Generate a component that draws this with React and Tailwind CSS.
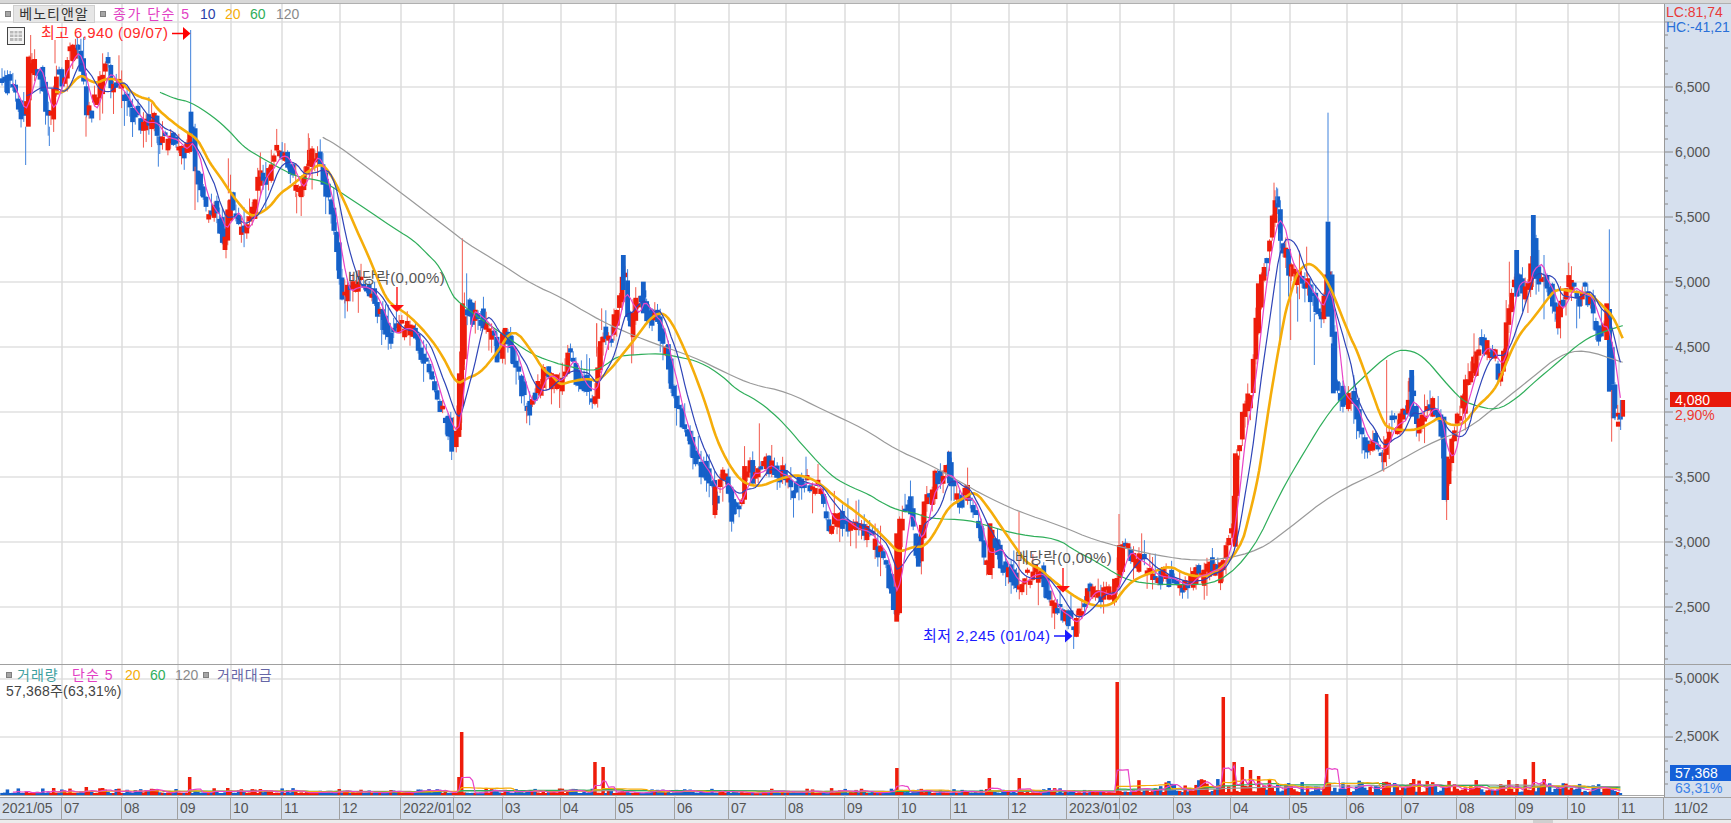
const RED = '#ee1c0a'
const BLUE = '#1560c8'
const RED_WICK = '#f2584c'
const BLUE_WICK = '#3f82dc'

// traced from the chart, in 3x crop coordinates
const crop = (ox, oy, pts) => pts.map(([x, y]) => [ox + x / 3, oy + y / 3])

const PRICE_PATH = [
  ...crop(0, 20, [[5,165],[20,190],[40,210],[55,270],[75,300],[85,150],[100,130],[125,170],[135,270],[150,320],[160,240],[170,150],[190,190],[200,110],[215,90],[235,110],[245,150],[260,290],[280,260],[295,230],[310,130],[325,150],[335,210],[360,200],[380,260],[410,290],[430,320],[460,290],[465,320],[490,370],[510,340],[530,380],[560,395],[575,310],[585,440],[605,510],[620,580],[640,560],[660,620],[675,670],[690,520],[710,610],[730,640],[750,600],[765,530],[780,450],[800,470],[815,430],[830,390],[850,420],[870,430],[880,490],[905,520],[920,430],[935,400],[955,420],[975,510],[990,570],[1005,630],[1015,720]]),
  ...crop(300, 230, [[120,200],[140,180],[165,170],[190,170],[215,190],[240,250],[265,320],[290,300],[320,290],[345,320],[365,370],[390,410],[405,500],[415,530],[435,550],[455,640],[470,590],[480,480],[490,250],[505,220],[515,260],[545,260],[560,300],[580,310],[595,410],[610,310],[640,380],[655,420],[670,500],[685,540],[710,480],[735,410],[745,450],[770,450]]),
  ...crop(560, 230, [[0,460],[15,410],[25,350],[40,400],[55,470],[75,460],[95,500],[110,470],[115,380],[125,300],[135,320],[150,330],[170,240],[185,160],[192,110],[200,220],[215,320],[225,210],[240,220],[250,180],[260,270],[275,260],[295,260],[305,340],[320,380],[335,460],[350,510],[365,590],[385,630],[405,690],[430,720],[450,750],[465,820],[485,740],[500,740],[515,840],[530,810],[545,810],[555,720],[570,720],[590,750],[600,710],[625,700],[650,740],[680,730],[695,790],[710,760],[740,760],[775,770],[790,830],[805,890],[820,860],[845,870],[860,880],[880,900],[910,900],[930,920],[950,950],[980,990]]),
  ...crop(880, 420, [[30,520],[50,590],[55,340],[65,300],[85,250],[95,310],[115,420],[125,330],[135,220],[150,240],[165,170],[185,190],[205,130],[215,190],[235,260],[250,230],[265,220],[285,290],[295,330],[310,410],[325,450],[335,340],[350,390],[375,450],[395,460],[410,510],[430,470],[445,470],[465,460],[485,460],[500,510],[520,570],[545,580],[570,600],[580,630],[600,570],[620,520],[650,510],[680,530],[700,520],[717,450],[730,370],[745,400],[765,430],[785,420],[800,450],[825,470],[850,470],[880,480],[905,500],[930,490],[945,450],[970,480],[990,430],[1015,470]]),
  ...crop(1190, 100, [[105,1340],[120,1300],[130,1270],[135,1100],[150,1020],[160,930],[175,900],[185,850],[195,700],[205,600],[215,520],[230,470],[240,390],[255,310],[268,350],[275,480],[285,420],[295,510],[310,530],[325,520],[335,560],[355,560],[375,620],[395,630],[405,580],[415,430],[425,700],[435,850],[450,870],[465,930],[480,890],[500,950],[515,1020],[535,1030],[550,1020],[575,1080],[590,1000],[605,950],[620,990]]),
  ...crop(1400, 200, [[10,650],[20,620],[35,540],[50,690],[75,630],[95,620],[115,640],[128,750],[138,880],[150,730],[165,680],[185,630],[195,570],[210,540],[225,480],[235,440],[250,440],[265,450],[285,470],[295,540],[310,460],[320,340],[335,280],[350,200],[365,270],[385,260],[400,100],[410,230],[425,240],[435,240],[450,280],[470,350],[490,310],[497,260],[515,250],[535,300],[550,270],[570,300],[585,370],[600,410],[620,350],[628,450],[640,610],[655,670],[670,625]]),
]

const MA20 = [
  ...crop(0, 20, [[165,215],[185,218],[205,205],[225,180],[245,165],[265,180],[290,190],[320,175],[360,180],[385,210],[420,232],[455,240],[470,265],[510,300],[550,330],[590,355],[610,390],[630,430],[660,470],[700,530],[750,590],[780,580],[810,560],[840,520],[870,500],[900,475],[930,450],[965,430],[990,460],[1020,515]]),
  ...crop(300, 230, [[170,0],[215,100],[250,190],[275,225],[320,250],[380,310],[430,380],[470,465],[500,445],[540,430],[590,370],[640,290],[700,370],[730,420],[760,440]]),
  ...crop(560, 230, [[0,465],[30,455],[85,445],[110,455],[150,420],[190,370],[230,320],[270,265],[305,245],[335,275],[370,350],[400,420],[440,530],[470,630],[510,710],[550,760],[600,770],[650,750],[700,735],[740,740],[780,760],[830,805],[880,840],[930,880]]),
  ...crop(880, 420, [[0,340],[30,370],[55,398],[100,380],[135,380],[170,330],[205,260],[250,235],[285,212],[330,270],[370,330],[405,380],[440,430],[480,445],[510,475],[550,505],[600,540],[650,560],[700,553],[730,510],[760,480],[820,455],[870,437],[910,460],[950,470],[1000,465]]),
  ...crop(1190, 100, [[150,1350],[180,1240],[205,1130],[225,1000],[240,900],[260,780],[285,640],[300,590],[320,520],[350,490],[370,495],[400,525],[425,570],[480,710],[500,750],[540,860],[580,970],[600,985]]),
  ...crop(1400, 200, [[0,690],[50,690],[90,670],[120,650],[145,675],[190,675],[230,620],[270,585],[295,550],[330,460],[360,400],[400,355],[440,300],[470,265],[520,275],[570,280],[610,320],[640,350],[668,415]]),
]

const MA60 = [
  ...crop(0, 20, [[480,217],[530,238],[570,245],[640,290],[690,335],[730,380],[770,405],[840,445],[880,465],[915,475],[965,482],[1020,515]]),
  ...crop(300, 230, [[290,0],[340,30],[380,70],[420,110],[450,180],[470,215],[640,335],[700,375],[770,400]]),
  ...crop(560, 230, [[0,402],[50,415],[100,422],[130,410],[170,380],[210,375],[300,370],[350,380],[420,395],[490,440],[530,480],[590,510],[640,550],[680,590],[740,660],[810,735],[860,765],[930,795]]),
  ...crop(880, 420, [[0,245],[50,270],[110,280],[145,295],[270,300],[330,320],[420,345],[530,355],[590,395],[650,425],[720,470],[780,490],[900,495],[1020,490]]),
  ...crop(1190, 100, [[190,1350],[270,1180],[340,1060],[420,930],[500,850],[610,750]]),
  ...crop(1400, 200, [[40,452],[80,480],[130,540],[185,600],[220,615],[290,632],[350,595],[410,540],[470,490],[550,420],[610,395],[668,377]]),
]

const MA120 = [
  ...crop(0, 20, [[968,352],[1020,380]]),
  ...crop(300, 230, [[450,0],[500,40],[600,100],[700,165]]),
  ...crop(560, 230, [[0,200],[100,260],[170,295],[280,340],[400,380],[500,430],[580,465],[680,485],[790,540],[910,595]]),
  ...crop(880, 420, [[50,90],[130,125],[215,170],[300,220],[415,275],[550,320],[640,360],[800,400],[920,420],[1020,420]]),
  ...crop(1190, 100, [[210,1350],[290,1290],[430,1180],[580,1110]]),
  ...crop(1400, 200, [[0,780],[110,720],[200,690],[300,610],[400,530],[480,465],[550,448],[668,487]]),
]

// long wicks and big bodies: x, top, bottom, colour, kind (crop coordinates)
const MARKS = [
  [0, 20, [[572,30,280,'b','w'],[573,275,340,'b','c'],[77,320,435,'b','w'],[92,45,130,'r','w'],[165,60,130,'r','w'],[232,50,100,'b','w'],[678,670,715,'r','w'],[685,415,520,'r','w'],[585,440,570,'r','w'],[780,410,470,'r','w'],[890,520,580,'r','w'],[925,340,420,'r','w'],[475,350,440,'b','w'],[148,320,378,'b','w'],[258,290,350,'r','w'],[85,110,320,'r','c'],[675,650,690,'r','c']]],
  [300, 230, [[487,25,260,'r','w'],[487,220,420,'r','c'],[478,430,600,'r','c'],[500,130,230,'b','w'],[890,280,380,'r','w'],[135,200,265,'b','w'],[455,600,690,'b','w'],[455,600,665,'b','c'],[245,270,345,'b','w'],[680,530,580,'r','w']]],
  [560, 230, [[190,75,180,'b','c'],[598,580,710,'r','w'],[738,680,770,'b','w'],[125,235,300,'r','w'],[110,280,370,'r','w'],[515,780,905,'b','w'],[515,780,875,'b','c'],[215,320,400,'r','w'],[465,770,865,'r','w'],[465,770,855,'r','c'],[250,155,250,'b','c']]],
  [880, 420, [[417,275,500,'r','w'],[717,282,450,'r','w'],[718,375,450,'r','c'],[208,95,190,'b','c'],[50,340,605,'r','c'],[440,470,525,'r','w'],[40,500,570,'b','c'],[330,310,465,'r','c'],[115,350,440,'b','c']]],
  [1190, 100, [[414,38,365,'b','w'],[414,365,650,'b','c'],[252,248,300,'r','w'],[260,262,310,'b','w'],[270,400,735,'b','w'],[302,500,720,'r','w'],[323,560,665,'b','w'],[373,640,795,'b','w'],[350,440,530,'r','w'],[590,780,1000,'r','w'],[577,1050,1110,'b','w'],[136,1060,1340,'r','c'],[205,550,680,'r','c'],[430,730,880,'b','c']]],
  [1400, 200, [[140,770,960,'r','w'],[140,770,900,'r','c'],[132,650,900,'b','c'],[35,510,650,'b','c'],[400,45,230,'b','c'],[350,150,290,'b','c'],[328,185,290,'r','w'],[432,165,358,'b','w'],[530,300,385,'b','w'],[668,600,650,'r','c'],[655,665,680,'r','c'],[662,600,690,'b','w'],[640,555,655,'b','c'],[628,88,340,'b','w'],[628,340,575,'b','c'],[620,310,420,'r','c'],[635,570,725,'r','w'],[475,320,385,'r','c'],[222,400,490,'r','w']]],
]

const VOLUME_SPIKES = [
  [85,787],[102,788],[55,788],[153,789],[158,789],[191,777],[228,788],[260,789],[339,789],[390,790],[445,790],[459,777],[462,732],
  [596,762],[602,767],[898,768],[988,778],[1018,778],[1118,682],[1222,697],[1234,762],[1242,767],[1250,770],[1258,776],[1270,780],
  [1328,694],[1413,779],[1410,783],[1446,785],[1504,786],[1509,780],[1517,784],[1533,762],[1544,779],[1609,715],
]

const HORIZONTAL = [22, 87, 152, 217, 282, 347, 412, 477, 542, 607]
const PRICE_LABELS = [[87,'6,500'],[152,'6,000'],[217,'5,500'],[282,'5,000'],[347,'4,500'],[477,'3,500'],[542,'3,000'],[607,'2,500']]
const MONTHS = [
  ['2021/05',0],['07',62],['08',122],['09',178],['10',231],['11',282],['12',340],['2022/01',401],['02',454],['03',503],['04',561],['05',616],['06',675],['07',729],['08',786],['09',845],['10',899],['11',951],['12',1009],['2023/01',1067],['02',1120],['03',1174],['04',1231],['05',1290],['06',1347],['07',1402],['08',1457],['09',1516],['10',1568],['11',1619],
]

const random = (() => {
  let seed = 20231102
  return () => {
    seed = (seed * 1664525 + 1013904223) % 4294967296
    return seed / 4294967296
  }
})()

const monotone = (pts) => {
  const out = []
  pts.forEach((p) => {
    if (!out.length || p[0] > out[out.length - 1][0]) out.push(p)
  })
  return out
}

const interpolate = (pts, x) => {
  for (let i = 1; i < pts.length; i++) {
    if (x <= pts[i][0]) {
      const t = (x - pts[i - 1][0]) / (pts[i][0] - pts[i - 1][0])
      return pts[i - 1][1] + (pts[i][1] - pts[i - 1][1]) * Math.max(t, 0)
    }
  }
  return pts[pts.length - 1][1]
}

const sma = (values, xs, n) => {
  const out = []
  for (let i = n - 1; i < values.length; i++) {
    let sum = 0
    for (let j = i - n + 1; j <= i; j++) sum += values[j]
    out.push([xs[i], sum / n])
  }
  return out
}

// rounds off the corners of a traced line
const smooth = (pts, passes = 2) => {
  let cur = pts
  for (let k = 0; k < passes; k++) {
    const next = [cur[0]]
    for (let i = 0; i < cur.length - 1; i++) {
      const [ax, ay] = cur[i]
      const [bx, by] = cur[i + 1]
      next.push([ax * 0.75 + bx * 0.25, ay * 0.75 + by * 0.25])
      next.push([ax * 0.25 + bx * 0.75, ay * 0.25 + by * 0.75])
    }
    next.push(cur[cur.length - 1])
    cur = next
  }
  return cur
}

const toPoints = (pts) => pts.map(([x, y]) => `${x.toFixed(1)},${y.toFixed(1)}`).join(' ')

const path = monotone(PRICE_PATH)
const xs = []
for (let x = 2; x <= 1623; x += 2.72) xs.push(x)
const centers = xs.map((x) => interpolate(path, x))

const candles = xs.map((x, i) => {
  const c = centers[i] + (random() - 0.5) * 17
  const o = (i ? centers[i - 1] : c) + (random() - 0.5) * 17
  const top = Math.min(o, c) - 1.5
  const bottom = Math.max(o, c) + 1.5
  return {
    x,
    top,
    bottom,
    high: top - random() * random() * 26,
    low: bottom + random() * random() * 26,
    up: c < o,
  }
})

const volumes = xs.map((x) => {
  const r = random()
  if (x > 1120) return 3 + r * r * 13
  return 2 + r * r * r * 5
})
const spikeIndex = new Set()
VOLUME_SPIKES.forEach(([x, top]) => {
  const i = Math.round((x - 2) / 2.72)
  volumes[i] = 795 - top
  spikeIndex.add(i)
})
volumes.slice(-6).forEach((_, k) => {
  volumes[volumes.length - 6 + k] = 7 - k
})

const volumeLine = (n) => sma(volumes, xs, n).map(([x, v]) => [x, 795 - v])

function GridLines({ top, bottom }) {
  return (
    <>
      {HORIZONTAL.filter((y) => y > top && y < bottom).map((y) => (
        <line key={y} x1="0" x2="1664" y1={y} y2={y} stroke="#e0e0e0" strokeWidth="1.5" />
      ))}
      {MONTHS.slice(1).map(([label, x]) => (
        <line key={x} x1={x} x2={x} y1={top} y2={bottom} stroke="#dcdcdc" strokeWidth="1.5" />
      ))}
    </>
  )
}

function Candles() {
  return (
    <>
      {candles.map((c) => (
        <g key={c.x}>
          <line x1={c.x} x2={c.x} y1={c.high} y2={c.low} stroke={c.up ? RED_WICK : BLUE_WICK} strokeWidth="1" />
          <rect x={c.x - 2.4} y={c.top} width="4.8" height={c.bottom - c.top} fill={c.up ? RED : BLUE} />
        </g>
      ))}
      {MARKS.map(([ox, oy, marks]) =>
        marks.map(([x, y1, y2, color, kind]) =>
          kind === 'w' ? (
            <line key={`${ox}-${x}-${y1}`} x1={ox + x / 3} x2={ox + x / 3} y1={oy + y1 / 3} y2={oy + y2 / 3} stroke={color === 'r' ? RED_WICK : BLUE_WICK} strokeWidth="1" />
          ) : (
            <rect key={`${ox}-${x}-${y1}`} x={ox + x / 3 - 2.4} y={oy + y1 / 3} width="4.8" height={(y2 - y1) / 3} fill={color === 'r' ? RED : BLUE} />
          ),
        ),
      )}
    </>
  )
}

function PriceChart() {
  return (
    <svg width="1664" height="660" viewBox="0 4 1664 660" className="block shrink-0">
      <GridLines top={4} bottom={664} />
      <Candles />
      <polyline points={toPoints(smooth(MA120))} fill="none" stroke="#9a9a9a" strokeWidth="1.2" />
      <polyline points={toPoints(smooth(MA60))} fill="none" stroke="#2fae5a" strokeWidth="1.2" />
      <polyline points={toPoints(smooth(MA20))} fill="none" stroke="#f5ad0a" strokeWidth="2.6" strokeLinejoin="round" />
      <polyline points={toPoints(sma(centers, xs, 10))} fill="none" stroke="#2f45b8" strokeWidth="1.2" />
      <polyline points={toPoints(sma(centers, xs, 5))} fill="none" stroke="#e845c8" strokeWidth="1.2" />

      <text x="41" y="38" fontSize="15" letterSpacing="0.4" fill="#ff2a2a">최고 6,940 (09/07)</text>
      <path d="M172 33.5H184" stroke="#ff0000" strokeWidth="1.5" />
      <path d="M183 27L190.5 33.5L183 40Z" fill="#ff0000" />

      <text x="923" y="641" fontSize="15" letterSpacing="0.4" fill="#1a1aff">최저 2,245 (01/04)</text>
      <path d="M1054 636H1066" stroke="#1a1aff" strokeWidth="1.5" />
      <path d="M1065 629.5L1072.5 636L1065 642.5Z" fill="#1a1aff" />

      <text x="348" y="283" fontSize="15" letterSpacing="0.3" fill="#555555">배당락(0,00%)</text>
      <path d="M397 287V306" stroke="#ff2020" strokeWidth="1.5" />
      <path d="M390 305H404L397 312Z" fill="#ff1010" />

      <text x="1015" y="563" fontSize="15" letterSpacing="0.3" fill="#555555">배당락(0,00%)</text>
      <path d="M1063 568V587" stroke="#ff2020" strokeWidth="1.5" />
      <path d="M1056 586H1070L1063 592.5Z" fill="#ff1010" />
    </svg>
  )
}

function VolumeChart() {
  return (
    <svg width="1664" height="132" viewBox="0 665 1664 132" className="block shrink-0">
      <line x1="0" x2="1664" y1="679" y2="679" stroke="#e0e0e0" strokeWidth="1.5" />
      <line x1="0" x2="1664" y1="737" y2="737" stroke="#e0e0e0" strokeWidth="1.5" />
      {MONTHS.slice(1).map(([label, x]) => (
        <line key={x} x1={x} x2={x} y1="665" y2="797" stroke="#dcdcdc" strokeWidth="1.5" />
      ))}
      {xs.map((x, i) => (
        <rect key={x} x={x - 1.75} y={795 - volumes[i]} width="3.5" height={volumes[i]} fill={candles[i].up || spikeIndex.has(i) ? RED : BLUE} />
      ))}
      <polyline points={toPoints(volumeLine(120))} fill="none" stroke="#9a9a9a" strokeWidth="1.2" />
      <polyline points={toPoints(volumeLine(60))} fill="none" stroke="#2fae5a" strokeWidth="1.2" />
      <polyline points={toPoints(volumeLine(20))} fill="none" stroke="#f5ad0a" strokeWidth="1.2" />
      <polyline points={toPoints(volumeLine(5))} fill="none" stroke="#e845c8" strokeWidth="1.2" />
      <line x1="0" x2="1664" y1="795.5" y2="795.5" stroke="#a8a8a8" strokeWidth="1" />
    </svg>
  )
}

function PriceAxis() {
  const ticks = []
  for (let y = 22; y < 660; y += 13) ticks.push(y)
  return (
    <svg width="66" height="660" viewBox="1665 4 66 660" className="block">
      {ticks.map((y) => (
        <line key={y} x1="1665" x2={(y - 22) % 65 === 0 ? 1673 : 1668} y1={y} y2={y} stroke="#888888" />
      ))}
      {PRICE_LABELS.map(([y, label]) => (
        <text key={y} x="1675" y={y + 5} fontSize="14" fill="#555555">{label}</text>
      ))}
      <rect x="1670" y="392" width="61" height="15" fill="#e8190a" />
      <text x="1675" y="404.5" fontSize="14" fill="#ffffff">4,080</text>
      <text x="1675" y="420" fontSize="14" fill="#ee3a30">2,90%</text>
    </svg>
  )
}

function VolumeAxis() {
  const ticks = [679, 690, 702, 714, 725, 737, 749, 761, 772, 784]
  return (
    <svg width="66" height="132" viewBox="1665 665 66 132" className="block">
      {ticks.map((y) => (
        <line key={y} x1="1665" x2={y === 679 || y === 737 ? 1673 : 1668} y1={y} y2={y} stroke="#888888" />
      ))}
      <text x="1675" y="683" fontSize="14" fill="#555555">5,000K</text>
      <text x="1675" y="741" fontSize="14" fill="#555555">2,500K</text>
      <rect x="1670" y="765" width="61" height="16" fill="#1560d8" />
      <text x="1675" y="778" fontSize="14" fill="#ffffff">57,368</text>
      <text x="1675" y="793" fontSize="14" fill="#3a80e8">63,31%</text>
    </svg>
  )
}

function Dot() {
  return <span className="block w-[6px] h-[6px] bg-[#a6a6a6] border border-[#808080] shrink-0" />
}

function PriceLegend() {
  return (
    <div className="absolute left-[5px] top-[1px] flex items-center text-[14px] leading-none">
      <Dot />
      <span className="ml-[2px] w-[82px] h-[18px] flex items-center justify-center bg-[#e6e6e6] border border-[#cfcfcf] text-[#333] text-[14px] tracking-[1px]">
        베노티앤알
      </span>
      <span className="ml-[5px]"><Dot /></span>
      <span className="ml-[7px] w-[87px] text-[#e23fc4] tracking-[1.5px]">종가 단순 5</span>
      <span className="w-[25px] text-[#2b3fa8]">10</span>
      <span className="w-[25px] text-[#f5ad0a]">20</span>
      <span className="w-[26px] text-[#2fae5a]">60</span>
      <span className="text-[#8a8a8a]">120</span>
    </div>
  )
}

function VolumeLegend() {
  return (
    <div className="absolute left-[6px] top-[2px] text-[14px] leading-none">
      <div className="flex items-center h-[16px]">
        <Dot />
        <span className="ml-[5px] w-[55px] text-[#3fa0a0] tracking-[1px]">거래량</span>
        <span className="w-[53px] text-[#e23fc4] tracking-[1px]">단순 5</span>
        <span className="w-[25px] text-[#f5ad0a]">20</span>
        <span className="w-[25px] text-[#2fae5a]">60</span>
        <span className="w-[28px] text-[#8a8a8a]">120</span>
        <Dot />
        <span className="ml-[8px] text-[#6666a6] tracking-[1px]">거래대금</span>
      </div>
      <div className="mt-[1px] text-[#444] tracking-[0.2px]">57,368주(63,31%)</div>
    </div>
  )
}

function GridButton() {
  return (
    <svg width="18" height="18" viewBox="0 0 18 18" className="absolute left-[7px] top-[23px]">
      <rect x="0.5" y="0.5" width="17" height="17" fill="#f4f4f4" stroke="#444444" />
      <rect x="3" y="4" width="12" height="10" fill="#b8b8b8" />
      <path d="M3 7H15M3 10.5H15M7 4V14M11 4V14" stroke="#f4f4f4" />
    </svg>
  )
}

function DateBar() {
  return (
    <div className="flex h-[23px] bg-[#d6e0ee] border-y border-[#a0a0a0] text-[14px] text-[#555]">
      {MONTHS.map(([label, x], i) => {
        const next = i + 1 < MONTHS.length ? MONTHS[i + 1][1] : 1664
        return (
          <div key={x} style={{ width: next - x }} className="shrink-0 pl-[2px] border-r border-[#a0a0a0] leading-[21px]">
            {label}
          </div>
        )
      })}
      <div className="flex-1 pl-[10px] leading-[21px]">11/02</div>
    </div>
  )
}

export default function App() {
  return (
    <div className="w-[1731px] h-[823px] flex flex-col bg-white overflow-hidden font-['Liberation_Sans','Noto_Sans_CJK_KR',sans-serif]">
      <div className="h-[4px] bg-[#d8d8d8] border-b border-[#b0b0b0]" />
      <div className="flex h-[660px]">
        <div className="relative w-[1664px] shrink-0">
          <PriceChart />
          <PriceLegend />
          <GridButton />
        </div>
        <div className="relative flex-1 bg-[#d6e0ee] border-l border-[#999] overflow-hidden">
          <PriceAxis />
          <div className="absolute left-[1px] top-0 text-[14px] leading-[15px] whitespace-nowrap">
            <div className="text-[#e83a3a] pt-[1px]">LC:81,74</div>
            <div className="text-[#2a70d8]">HC:-41,21</div>
          </div>
        </div>
      </div>
      <div className="flex h-[133px] border-t border-[#a0a0a0]">
        <div className="relative w-[1664px] shrink-0">
          <VolumeChart />
          <VolumeLegend />
        </div>
        <div className="flex-1 bg-[#d6e0ee] border-l border-[#999] overflow-hidden">
          <VolumeAxis />
        </div>
      </div>
      <DateBar />
      <div className="h-[3px] bg-[#ececec] pl-[1533px]">
        <div className="w-[20px] h-[3px] bg-[#cfcfcf]" />
      </div>
    </div>
  )
}
